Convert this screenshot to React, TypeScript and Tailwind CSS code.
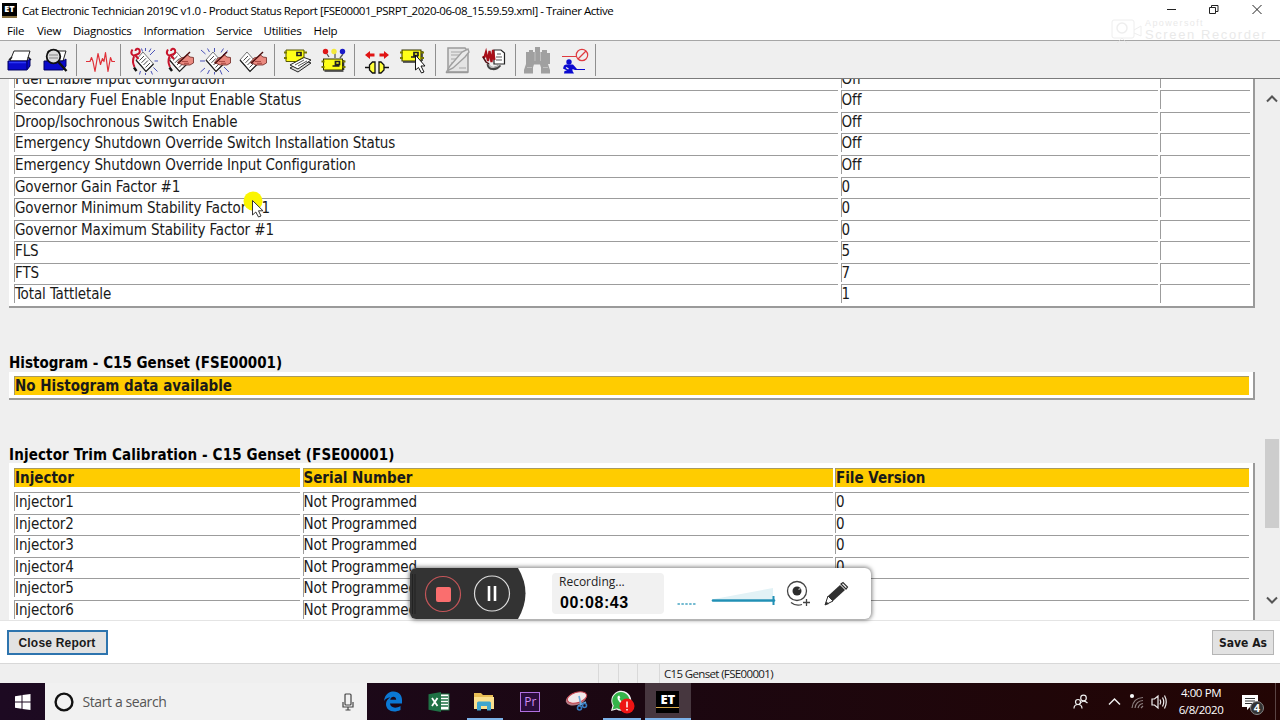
import React from "react";

const menuItems = [
  { label: "File", width: "w-[30px]" },
  { label: "View", width: "w-[36px]" },
  { label: "Diagnostics", width: "w-[70.5px]" },
  { label: "Information", width: "w-[72.5px]" },
  { label: "Service", width: "w-[47.5px]" },
  { label: "Utilities", width: "w-[50px]" },
  { label: "Help", width: "w-[40px]" },
];

const configRows = [
  { name: "Fuel Enable Input Configuration", value: "Off" },
  { name: "Secondary Fuel Enable Input Enable Status", value: "Off" },
  { name: "Droop/Isochronous Switch Enable", value: "Off" },
  {
    name: "Emergency Shutdown Override Switch Installation Status",
    value: "Off",
  },
  { name: "Emergency Shutdown Override Input Configuration", value: "Off" },
  { name: "Governor Gain Factor #1", value: "0" },
  { name: "Governor Minimum Stability Factor #1", value: "0" },
  { name: "Governor Maximum Stability Factor #1", value: "0" },
  { name: "FLS", value: "5" },
  { name: "FTS", value: "7" },
  { name: "Total Tattletale", value: "1" },
];

const injectors = [
  "Injector1",
  "Injector2",
  "Injector3",
  "Injector4",
  "Injector5",
  "Injector6",
];

const Slot = ({ children }: { children: React.ReactNode }) => (
  <svg
    className="w-[36.7px] h-[37px] shrink-0"
    viewBox="0 0 36.7 37"
    fill="none"
  >
    {children}
  </svg>
);

const Separator = () => (
  <div className="w-px h-8 ml-[2px] mr-[4px] mt-[3px] bg-[#8f8f8f] shrink-0" />
);

const Page = () => (
  <g>
    <path d="M11 19 L18 11 L28.500 23 L21 30.500 Z" fill="#fff" stroke="#555" strokeWidth="0.8" />
    <path d="M11 19 L21 30.500 L28.500 23" stroke="#222" strokeWidth="1.2" />
    <path
      d="M14.500 19.500 l4.500 -4.500 M16.500 21.800 l4.500 -4.500 M18.500 24 l4.500 -4.500 M20.500 26.500 l4.500 -4.500"
      stroke="#444"
      strokeWidth="1"
    />
  </g>
);

const Hand = () => (
  <g>
    <path
      d="M15.500 21.500 L19 17 L23 16 L25 13.500 L28 16 L31.500 16.500 L31.500 22 L28 24 L21 24 Z"
      fill="#ea8a80"
      stroke="#6d2420"
      strokeWidth="0.8"
    />
    <path d="M20 20.500 h6 M22 22.300 h5" stroke="#9c3a34" strokeWidth="0.8" />
    <path d="M28 11 L16 22.500" stroke="#4a0c0c" strokeWidth="1.4" />
  </g>
);

const Wrench = () => (
  <g>
    <path
      d="M7.500 8.500 C5 12 7 15.500 10.500 14 C14 13 15.500 12 14.500 9 C13.500 7 10.500 7.500 10.500 10 M10.500 14.500 L13.500 18 M9 15.500 C7.500 19 8 23 9.500 26"
      stroke="#c8142c"
      strokeWidth="2"
    />
    <path d="M9 26.500 L11.500 30" stroke="#111" strokeWidth="2.4" />
  </g>
);

const Rays = () => (
  <path
    d="M16.500 7 v4 M9.500 7.500 l2 3.500 M3 9 l4.500 4 M25.500 7.500 l-2.500 4 M30 9.500 l-5 4.500 M2 20 h5 M26 20 h6 M7 27 l-4.500 4 M11.500 29 l-2 4 M16.500 31 v2.500 M22 29 l2 4.500 M26 26 l5 5"
    stroke="#4a52b8"
    strokeWidth="1"
  />
);

const Ecm = () => (
  <g>
    <rect x="7" y="10" width="19" height="11" fill="#ffff18" stroke="#333300" />
    <path d="M8 22 h19 M27 11 v10" stroke="#333" strokeWidth="1.6" />
    <path d="M5 12.5 h3 M5 18 h3 M26 12.5 h3 M26 18 h3" stroke="#777700" strokeWidth="2" />
    <path d="M19 12.5 h4 v3 h-4z M16 17 h7" stroke="#222" strokeWidth="1.7" />
  </g>
);

const Toolbar = () => (
  <div className="flex h-[37px] bg-[#efefef] pl-px shrink-0">
    <Slot>
      <path d="M13 10 L29 10 L26 20 L9 20 Z" fill="#fff" stroke="#222" />
      <path d="M8 19 L11 16 M27 16 L30 19" stroke="#222" strokeWidth="1.5" />
      <path d="M7 20 H26 L29 18 V25 L26 29 H7 Z" fill="#0a0acb" stroke="#000060" />
      <path d="M8 21.5 H25" stroke="#2d39f4" strokeWidth="1.5" />
      <path d="M26 20 V28" stroke="#00005c" />
    </Slot>
    <Slot>
      <path d="M10 10 H28 L25 20 H9 Z" fill="#fff" stroke="#222" />
      <path d="M6 20 H25 L28 18 V25 L25 29 H6 Z" fill="#0a0acb" stroke="#000060" />
      <circle cx="15.500" cy="15.500" r="6.800" fill="#dcdcdc" stroke="#111" strokeWidth="1.800" />
      <path d="M11 14 h9 M11 17 h9" stroke="#888" />
      <path d="M20.500 21 L28.500 30" stroke="#111" strokeWidth="2.4" />
    </Slot>
    <Separator />
    <Slot>
      <path
        d="M5 20.500 h4 l1.500 -4 1.500 4 2 10 3 -18 2.500 11 2 -6 1.500 3 1.500 -9 2.500 19 2.500 -14 1.500 4 h3"
        stroke="#e03038"
        strokeWidth="1.2"
        strokeLinejoin="round"
      />
    </Slot>
    <Separator />
    <Slot>
      <path
        d="M20.500 7 v3 M16.500 7.500 l1 3 M30 9 l-5 5 M26 7.500 l-2 3.500 M29.500 20 h3.500 M15.500 30 l-1 3.500 M20.500 32 v2 M26 30 l1.500 3.500 M28.500 26.500 l4 4"
        stroke="#4a52b8"
      />
      <Page />
      <Wrench />
    </Slot>
    <Slot>
      <g transform="translate(-3.5 0)">
        <Page />
      </g>
      <g transform="translate(-1.500 0)">
        <Wrench />
      </g>
      <Hand />
    </Slot>
    <Slot>
      <Rays />
      <g transform="translate(-3 0)">
        <Page />
      </g>
      <g transform="translate(1 0)">
        <Hand />
      </g>
    </Slot>
    <Slot>
      <g transform="translate(-6 0)">
        <Page />
      </g>
      <Hand />
    </Slot>
    <Separator />
    <Slot>
      <path d="M11 27 L25 19.500 L32 22 L19 31 Z" fill="#ddd" stroke="#222" />
      <path d="M11 24 L25 16.500 L32 19 L19 28 Z" fill="#fff" stroke="#222" />
      <path d="M16 24 l9 -5 M19 25 l9 -5" stroke="#555" />
      <g transform="translate(0 -1)">
        <path d="M7 10 h18 v7 l-8 4.500 h-10z" fill="#ffff18" stroke="#555500" />
        <path d="M5 12.5 h3 M5 18 h3 M25 12.5 h3" stroke="#777700" strokeWidth="2" />
        <path d="M18 12.5 h4 v3 h-4z" stroke="#222" strokeWidth="1.7" />
      </g>
    </Slot>
    <Slot>
      <path d="M11 13 L13 16 M19 12 V17 M27 13 L24 17" stroke="#555" strokeWidth="1.3" />
      <circle cx="9.500" cy="10.500" r="2.700" fill="#df1919" />
      <circle cx="18" cy="10.500" r="2.700" fill="#f3e93b" />
      <circle cx="26.500" cy="10.500" r="2.700" fill="#1a1ac8" />
      <g transform="translate(0.500 8)">
        <Ecm />
      </g>
    </Slot>
    <Separator />
    <Slot>
      <path d="M6 14 L11 10 V12.500 H15.500 V15.500 H11 V18 Z" fill="#e01414" />
      <path d="M30 14 L25 10 V12.500 H20.500 V15.500 H25 V18 Z" fill="#e01414" />
      <path d="M16 21 V32 H13.500 L10.500 29 V24 L13.500 21 Z" fill="#ffff3c" stroke="#111" strokeWidth="1.300" />
      <path d="M20 21 V32 H22 L25 29 V24 L22 21 Z" fill="#ffff3c" stroke="#111" strokeWidth="1.300" />
      <path d="M6 26.500 h4 M25 26.500 h5" stroke="#111" strokeWidth="1.600" />
    </Slot>
    <Slot>
      <g transform="translate(-1 -1)">
        <Ecm />
        <path d="M20.500 15 V30 L23.500 27.500 L26.500 33 L29 32 L26 26 H30 Z" fill="#fff" stroke="#111" />
      </g>
    </Slot>
    <Separator />
    <Slot>
      <path d="M8 7 H25 L28 10 V31 H8 Z" fill="#e4e4e4" stroke="#9b9b9b" strokeWidth="1.500" />
      <path d="M11 11 h11 M11 14 h9 M11 18 h7 M11 22 h4 M19 27 h7" stroke="#a5a5a5" strokeWidth="1.200" />
      <path d="M7 30 L10 25 L22 11 L28 8 L29 11 L25 16 L13 27 Z" fill="#e9e9e9" stroke="#a0a0a0" strokeWidth="1.400" />
      <path d="M6 31.500 H28" stroke="#999" strokeWidth="1.500" />
    </Slot>
    <Slot>
      <path d="M18 9 H25 L28.500 12 V23 H18 Z" fill="#fff" stroke="#222" strokeWidth="1.200" />
      <path d="M21 13 h4 M20 16 h6 M20 19 h6" stroke="#555" />
      <path d="M6.500 16 h2 l1.500 -5 2 9 1.500 -10 2 11 1.500 -12 1.500 10" stroke="#a80e18" strokeWidth="2.200" />
      <path d="M7 16 l3 5 3 2" stroke="#4b1014" strokeWidth="1.500" />
      <path d="M12 23 C13 29 20 29 24 24" stroke="#444" strokeWidth="3" />
      <path d="M13 23 C14 27.500 20 27.500 23.500 23.500" stroke="#bbb" strokeWidth="1.300" />
    </Slot>
    <Separator />
    <Slot>
      <path
        d="M9 9 h4 v2 h2 v-5 h5 v5 h2 v-2 h5 v3 h3 v11 h-2 l2 6 v3.500 h-9 v-6 l-1 -3 h-6 l-1 3 v6 h-9 v-3.500 l2 -6 v-12 h3z"
        fill="#a0a0a0"
      />
      <path d="M15 11 v9 M20.500 11 v9 M7 26.500 h5 M23 26.500 h5" stroke="#c0c0c0" />
    </Slot>
    <Slot>
      <circle cx="25" cy="14" r="5.700" stroke="#df3b40" strokeWidth="1.200" />
      <path d="M5 15.500 H19 M29 10 L21 18" stroke="#df3b40" strokeWidth="1.200" />
      <circle cx="12" cy="21" r="2.700" fill="#0b0bd0" />
      <path
        d="M7 24.500 L9 23.500 H16 L20 28 H28 V29 H18 L15.500 28 V30 L17 32.500 H7 L7.500 30 L10 29.500 L6 27.500 Z"
        fill="#0b0bd0"
      />
      <path d="M9 26.500 l2.500 1.500" stroke="#efefef" strokeWidth="1.300" />
    </Slot>
    <Separator />
  </div>
);

const Cell = ({
  width,
  head,
  children,
}: {
  width: string;
  head?: boolean;
  children?: React.ReactNode;
}) => (
  <div
    className={`${width} h-[19px] shrink-0 border-t border-l whitespace-nowrap ${
      head
        ? "bg-[#ffcc00] border-[#a89a60] font-bold leading-[19px]"
        : "border-[#9c9c9c] leading-[18px] tracking-[-0.1px]"
    }`}
  >
    {children}
  </div>
);

const ConfigTable = () => (
  <div className="-mt-[10.3px] ml-[9px] w-[1245.5px] shrink-0 bg-white border-r-2 border-b-2 border-[#9a9a9a] pl-[5px]">
    {configRows.map((row) => (
      <div key={row.name} className="flex h-[21.57px] gap-[2.5px]">
        <Cell width="w-[824px]">{row.name}</Cell>
        <Cell width="w-[317px]">{row.value}</Cell>
        <Cell width="w-[89.5px]" />
      </div>
    ))}
  </div>
);

const InjectorTable = () => (
  <div className="ml-[9px] w-[1245.5px] h-[170px] shrink-0 bg-white border-r-2 border-[#9a9a9a] pl-[5px] pt-[5px]">
    <div className="flex h-[24.300px] gap-[2.5px]">
      <Cell head width="w-[286px]">Injector</Cell>
      <Cell head width="w-[530px]">Serial Number</Cell>
      <Cell head width="w-[414px]">File Version</Cell>
    </div>
    {injectors.map((injector) => (
      <div key={injector} className="flex h-[21.57px] gap-[2.5px]">
        <Cell width="w-[286px]">{injector}</Cell>
        <Cell width="w-[530px]">Not Programmed</Cell>
        <Cell width="w-[414px]">0</Cell>
      </div>
    ))}
  </div>
);

const Recorder = () => (
  <div className="absolute left-[410px] top-[568px] w-[461px] h-[51px] flex items-center bg-white rounded-md overflow-hidden shadow-[0_0_4px_1px_rgba(0,0,0,0.5)]">
    <svg className="w-[116px] h-[51px] shrink-0" viewBox="0 0 116 51" fill="none">
      <path d="M0 0 H108 Q123 25 108 51 H0 Z" fill="#333" />
      <path d="M2.500 6 V46 M5 6 V46" stroke="#222" />
      <circle cx="33" cy="26" r="17.500" stroke="#c25558" strokeWidth="1.2" />
      <rect x="26" y="19" width="15" height="15" rx="2" fill="#fa6e6e" />
      <circle cx="82" cy="25.500" r="17.500" stroke="#ddd" strokeWidth="1.2" />
      <path d="M79 18 V33 M85 18 V33" stroke="#fff" strokeWidth="2.600" />
    </svg>
    <div className="ml-[26px] w-[112px] h-[41px] bg-[#f1f1f1] rounded pl-[7px] shrink-0 font-['Open_Sans',sans-serif] text-[#222]">
      <div className="text-[12px] leading-[18px]">Recording...</div>
      <div className="font-['Liberation_Sans',sans-serif] font-bold text-[16px] leading-[23px] pl-px tracking-[0.6px] text-black">
        00:08:43
      </div>
    </div>
    <svg className="w-[207px] h-[51px] shrink-0" viewBox="0 0 207 51" fill="none">
      <path d="M13.500 36 H32" stroke="#45a4c2" strokeWidth="1.4" strokeDasharray="2.400 1.500" />
      <path d="M50 31 L109 20 V31 Z" fill="#e2f2f6" />
      <path d="M49 32.500 H110" stroke="#2190b5" strokeWidth="2.600" strokeLinecap="round" />
      <path d="M109.500 28 V37" stroke="#2190b5" strokeWidth="2" />
      <circle cx="133" cy="23" r="9.500" stroke="#444" strokeWidth="1.3" />
      <circle cx="133" cy="23" r="4.500" fill="#2c2c2c" />
      <path d="M134.500 21.500 l2 -1" stroke="#ccc" strokeWidth="1.2" />
      <path d="M127 34.500 Q132 38.500 138 36.500 M139 34.500 H146 M142.500 31 V38" stroke="#444" strokeWidth="1.3" />
      <path d="M161 37 L164 28 L176 17 L181 22 L169 33 Z" fill="#303030" />
      <path d="M161 37 L164 28 L169 33 Z" fill="#fff" stroke="#303030" />
      <path d="M161 37 L162.500 33.500 L165 36 Z" fill="#303030" />
      <path d="M177 16 L179 14.500 L183.500 19 L182 21 Z" fill="#fff" stroke="#303030" strokeWidth="1.2" />
    </svg>
  </div>
);

const TaskIcon = ({
  className = "",
  children,
}: {
  className?: string;
  children: React.ReactNode;
}) => (
  <div className={`w-[45.8px] h-full flex items-center justify-center relative shrink-0 ${className}`}>
    {children}
  </div>
);

const Taskbar = () => (
  <div className="flex h-[37px] shrink-0 bg-linear-to-r from-[#1d0a22] via-[#1b0711] to-[#230504] text-white">
    <div className="w-[45px] flex items-center justify-center shrink-0">
      <svg width="16" height="16" viewBox="0 0 16 16" fill="#fff">
        <path d="M0 2.200 L6.500 1.300 V7.500 H0 Z M7.500 1.100 L15.500 0 V7.500 H7.500 Z M0 8.500 H6.500 V14.700 L0 13.800 Z M7.500 8.500 H15.500 V16 L7.500 14.900 Z" />
      </svg>
    </div>
    <div className="w-[322px] flex items-center bg-[#f1f1f1] pl-[9px] pr-[13px] shrink-0 text-[#555]">
      <svg width="20" height="20" viewBox="0 0 20 20" fill="none">
        <circle cx="10" cy="10" r="8.400" stroke="#111" strokeWidth="2.400" />
      </svg>
      <span className="ml-[8.500px] grow font-['Open_Sans',sans-serif] text-[14px] tracking-[-0.400px]">
        Start a search
      </span>
      <svg width="12" height="18" viewBox="0 0 12 18" fill="none" stroke="#444" strokeWidth="1.2">
        <rect x="3" y="1" width="6" height="11" rx="1" />
        <path d="M1 9 V14 H11 V9 M6 14 V17 M3.500 17 H8.500" />
      </svg>
    </div>
    <div className="w-[3px] shrink-0" />
    <TaskIcon>
      <svg width="20" height="21" viewBox="0 0 20 21" fill="#0b78d4">
        <path d="M1 10 C2 3 6 0.500 10.500 0.500 C16 0.500 19 4.500 19 9 V12.500 H7 C7.300 17 13 17.800 17.500 15 V19 C10 22.500 3 19.500 3 13 C3 10 5 7.500 7.300 6.300 C4.500 6.800 2.500 8 1 10 Z M7.200 8.800 H13.200 C13.200 4.600 7.800 4.800 7.200 8.800 Z" fillRule="evenodd" />
      </svg>
    </TaskIcon>
    <TaskIcon>
      <svg width="22" height="20" viewBox="0 0 22 20">
        <rect x="10" y="2" width="11" height="16" fill="#fff" stroke="#1e7145" />
        <path d="M13 5 H20 M13 8 H20 M13 11 H20 M13 14 H20" stroke="#1e7145" strokeWidth="1.5" />
        <path d="M0.500 2.200 L13 0 V20 L0.500 17.800 Z" fill="#1e7145" />
        <path d="M4 6 L9.500 14 M9.500 6 L4 14" stroke="#fff" strokeWidth="1.800" />
      </svg>
    </TaskIcon>
    <TaskIcon>
      <svg width="22" height="19" viewBox="0 0 22 19">
        <path d="M1 1 H8 L10 3 H20 V17 H1 Z" fill="#e8bd55" />
        <path d="M1 5 H21 V17 H1 Z" fill="#fbe08e" />
        <path d="M4 18.500 V11 Q4 9.500 5.500 9.500 H16.500 Q18 9.500 18 11 V18.500 H14 V14 H8 V18.500 Z" fill="#3ea6cf" />
      </svg>
      <div className="absolute bottom-0 left-[5px] right-[4px] h-[2px] bg-[#7cb2e8]" />
    </TaskIcon>
    <TaskIcon>
      <div className="w-5 h-5 border border-[#b06fe0] bg-[#2a0c3a] text-[#cf8df2] text-[12px] leading-[17px] text-center font-['Open_Sans',sans-serif]">
        Pr
      </div>
    </TaskIcon>
    <TaskIcon>
      <svg width="24" height="21" viewBox="0 0 24 21" fill="none">
        <ellipse cx="12" cy="8" rx="10.500" ry="6" transform="rotate(-17 12 8)" fill="#b77c86" />
        <ellipse cx="13" cy="6.500" rx="10" ry="5.200" transform="rotate(-17 13 6.500)" fill="#f2e8ea" stroke="#c5404c" />
        <path d="M15 5 L17 14 M22 11 L14 15" stroke="#6ba9da" strokeWidth="1.600" />
        <circle cx="15.500" cy="17" r="2" stroke="#377bc0" strokeWidth="1.600" />
        <circle cx="20.500" cy="14.500" r="2" stroke="#377bc0" strokeWidth="1.600" />
      </svg>
    </TaskIcon>
    <TaskIcon>
      <svg width="26" height="25" viewBox="0 0 26 25" fill="none">
        <path d="M2 22 L3.500 16.500 A10 10 0 1 1 7.500 20.500 Z" fill="#f4f4f4" />
        <path d="M3.500 20.500 L4.800 16.500 A8.600 8.600 0 1 1 8 19.300 Z" fill="#35b44a" />
        <path d="M9 7 C7.500 9 9.500 13 13 15 C15.500 16.500 17 15 17.500 13.500 L15 12 L13.500 13 C12 12 11 11 10.500 9.800 L11.300 8.500 L10.200 6.500 Z" fill="#fff" />
        <circle cx="18" cy="17" r="7.500" fill="#ee1414" />
        <path d="M18 12.500 V18.500 M18 20 V21.500" stroke="#fff" strokeWidth="1.500" />
      </svg>
      <div className="absolute bottom-0 left-[4px] right-[4px] h-[2px] bg-[#7cb2e8]" />
    </TaskIcon>
    <TaskIcon className="bg-[#47373f]">
      <div className="w-[23px] h-[22px] bg-black flex flex-col">
        <span className="h-[17px] border-b border-[#d8a848] text-center text-[13px] leading-[17px] font-extrabold tracking-[-0.3px] font-['Open_Sans',sans-serif]">
          ET
        </span>
      </div>
      <div className="absolute bottom-0 left-0 right-0 h-[2px] bg-[#7cb2e8]" />
    </TaskIcon>
    <div className="grow" />
    <svg className="w-[98px] h-[37px] shrink-0" viewBox="0 0 98 37" fill="none" stroke="#eee" strokeWidth="1.200">
      <circle cx="12.500" cy="15" r="2.800" />
      <path d="M8.500 21 Q12 16 16.500 20" />
      <circle cx="7" cy="19" r="2.500" />
      <path d="M3 25.500 Q3 21.500 7 21.500 Q11 21.500 11 25.500" />
      <path d="M38 21.500 L43.500 16 L49 21.500" strokeWidth="1.500" />
      <circle cx="61" cy="13" r="1.500" fill="#fff" />
      <path d="M61 25 Q62 15 72 14.500 M64 25 Q65 18 72 17.500 M67 25 Q68 21 72 20.500 M70 25 L72 23" stroke="#8d8080" />
      <path d="M81 16 H83.500 L87 13 V25 L83.500 22 H81 Z M89 16.500 Q90.500 19 89 21.500 M91.500 14.500 Q94 19 91.500 23.500 M93.500 12.500 Q97 19 93.500 25.500" />
    </svg>
    <div className="w-[64px] flex flex-col items-center justify-center font-['Open_Sans',sans-serif] text-[11.500px] leading-[16.500px] tracking-[-0.400px] shrink-0">
      <span>4:00 PM</span>
      <span>6/8/2020</span>
    </div>
    <div className="w-[47px] relative shrink-0">
      <svg className="w-[16px] h-[15px] mt-[12px] ml-[9px]" viewBox="0 0 16 15">
        <path d="M0 0 H16 V12 H8 L5 15 V12 H0 Z" fill="#fff" />
        <path d="M3 3.500 H13 M3 6 H13 M3 8.500 H10" stroke="#333" />
      </svg>
      <div className="absolute left-[17px] top-[18px] w-[14px] h-[14px] rounded-full bg-[#333] border border-[#888] text-[11px] leading-[12px] font-bold text-center font-['Open_Sans',sans-serif]">
        4
      </div>
      <div className="absolute right-[4px] top-0 w-px h-full bg-[#5a4444]" />
    </div>
  </div>
);

const App = () => {
  return (
    <div className="relative w-[1280px] h-[720px] overflow-hidden flex flex-col bg-white text-[#1a1a1a]">
      <div className="h-5 flex items-start shrink-0 font-['Open_Sans',sans-serif] text-[11.500px] leading-[22px] text-black">
        <div className="ml-[2px] mt-[3px] w-[15px] h-[15px] bg-black border-b-2 border-[#8a7340] text-white text-[9px] leading-[12px] font-extrabold text-center shrink-0">
          ET
        </div>
        <span className="ml-[5px] grow whitespace-nowrap tracking-[-0.450px]">
          Cat Electronic Technician 2019C v1.0 - Product Status Report
          [FSE00001_PSRPT_2020-06-08_15.59.59.xml] - Trainer Active
        </span>
        <svg className="w-[120px] h-5 shrink-0" viewBox="0 0 120 20" fill="none" stroke="#222">
          <path d="M7 9.500 H16" />
          <path d="M49.500 7.500 H55.500 V13.500 H49.500 Z M51.500 7.500 V5.500 H58 V11.500 H55.500" />
          <path d="M92.500 5 L101.500 14 M101.500 5 L92.500 14" />
        </svg>
      </div>
      <div className="h-[21px] pl-[7px] flex shrink-0 border-b border-[#a6a6a6] font-['Open_Sans',sans-serif] text-[11.500px] leading-[21px] tracking-[-0.250px] text-black">
        {menuItems.map((item) => (
          <div key={item.label} className={`${item.width} whitespace-nowrap`}>
            {item.label}
          </div>
        ))}
      </div>
      <Toolbar />
      <div className="h-px bg-[#7b7b7b] shrink-0" />

      <div className="flex h-[541px] shrink-0 overflow-hidden bg-[#efefef] font-['DejaVu_Sans_Condensed','DejaVu_Sans',sans-serif] text-[15px]">
        <div className="w-[1264px] flex flex-col">
          <ConfigTable />
          <div className="mt-[46px] ml-[9px] h-[18px] leading-[18px] font-bold text-black shrink-0">
            Histogram - C15 Genset (FSE00001)
          </div>
          <div className="ml-[9px] w-[1245.5px] h-[28px] shrink-0 bg-white border-r-2 border-b-2 border-[#9a9a9a] pl-[5px] pt-[4px]">
            <Cell head width="w-[1235px]">No Histogram data available</Cell>
          </div>
          <div className="mt-[46px] ml-[9px] h-[17px] leading-[18px] tracking-[0.140px] font-bold text-black shrink-0">
            Injector Trim Calibration - C15 Genset (FSE00001)
          </div>
          <InjectorTable />
        </div>
        <div className="w-4 flex flex-col items-center">
          <svg className="mt-[16px]" width="12" height="8" viewBox="0 0 12 8" fill="none">
            <path d="M1 6.500 L6 1.500 L11 6.500" stroke="#555" strokeWidth="2" />
          </svg>
          <div className="mt-[336px] w-[14px] h-[89px] bg-[#cdcdcd]" />
          <svg className="mt-[68px]" width="12" height="8" viewBox="0 0 12 8" fill="none">
            <path d="M1 1.500 L6 6.500 L11 1.500" stroke="#555" strokeWidth="2" />
          </svg>
        </div>
      </div>

      <div className="h-[43px] flex items-center justify-between pl-[6.500px] pr-[6px] pt-px shrink-0 border-t border-[#e4e4e4] font-['DejaVu_Sans_Condensed','DejaVu_Sans',sans-serif]">
        <button className="w-[101px] h-[25px] border-2 border-[#2d74ae] bg-[#e2e2e2] text-[12px] leading-[20px] font-bold text-[#1a1a1a] font-['Liberation_Sans',sans-serif] tracking-[0.2px] whitespace-nowrap">
          Close Report
        </button>
        <button className="w-[62px] h-[25px] border border-[#b5b5b5] bg-[#e2e2e2] text-[12px] leading-[22px] font-bold text-[#1a1a1a] whitespace-nowrap">
          Save As
        </button>
      </div>
      <div className="h-5 flex shrink-0 bg-[#efefef] border-t border-[#d8d8d8] font-['Open_Sans',sans-serif] text-[11.500px] leading-[20px]">
        <div className="w-[599px] border-r border-[#d9d9d9]" />
        <div className="w-[19.500px] border-r border-[#d9d9d9]" />
        <div className="w-[19.500px] border-r border-[#d9d9d9]" />
        <div className="w-[22px] border-r border-[#d9d9d9]" />
        <span className="pl-1 tracking-[-0.650px] whitespace-nowrap">C15 Genset (FSE00001)</span>
      </div>
      <Taskbar />

      {/* recorder watermark */}
      <div className="absolute left-[1110px] top-[18px] flex opacity-60 font-['Liberation_Sans',sans-serif] text-[#dcdcdc]">
        <svg width="34" height="26" viewBox="0 0 34 26" fill="none" stroke="#e4e4e4">
          <rect x="2" y="2" width="22" height="18" rx="2" />
          <circle cx="12" cy="10" r="5" strokeWidth="1.500" />
          <path d="M24 12 L31 8 V18 L24 15 M7 25 L12 20 L17 25" />
        </svg>
        <div className="ml-px whitespace-nowrap">
          <div className="text-[9px] leading-[10px] tracking-[1.400px]">Apowersoft</div>
          <div className="text-[13px] leading-[14px] tracking-[1.600px]">Screen Recorder</div>
        </div>
      </div>

      <Recorder />

      {/* mouse pointer with click highlight */}
      <svg className="absolute left-[242px] top-[190px]" width="24" height="30" viewBox="0 0 24 30">
        <circle cx="11" cy="11" r="9.500" fill="#fbf500" />
        <path d="M10.500 10.500 V25 L13.800 22 L16.500 27 L19 26 L16.500 20.800 H21 Z" fill="#fff" stroke="#333" />
      </svg>
    </div>
  );
};

export default App;
